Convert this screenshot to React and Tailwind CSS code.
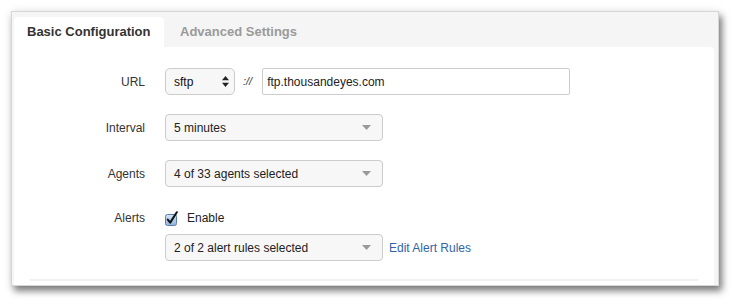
import React from 'react';

const Caret = () => (
  <svg width="9" height="5" viewBox="0 0 9 5" className="shrink-0">
    <path d="M0 0h9L4.5 5z" fill="#9a9a9a" />
  </svg>
);

const UpDown = () => (
  <svg width="7" height="11" viewBox="0 0 7 11" className="shrink-0">
    <path d="M3.5 0L7 4.3H0z" fill="#222" />
    <path d="M3.5 11L0 6.7h7z" fill="#222" />
  </svg>
);

const Dropdown = ({ value }) => (
  <div className="flex h-[27px] w-[218px] items-center justify-between rounded-[4px] border border-[#cccccc] bg-[#f7f7f7] pl-[8px] pr-[11px] text-[12px] text-[#222]">
    <span>{value}</span>
    <Caret />
  </div>
);

const Label = ({ children }) => (
  <div className="w-[116px] text-right text-[12px] text-[#333]">{children}</div>
);

const Checkbox = () => (
  <svg width="14" height="15" viewBox="0 0 14 15" className="shrink-0">
    <defs>
      <linearGradient id="cb" x1="0" y1="0" x2="0" y2="1">
        <stop offset="0" stopColor="#d6e6f7" />
        <stop offset="1" stopColor="#8fb4dc" />
      </linearGradient>
    </defs>
    <rect x="0.5" y="3.5" width="11" height="11" rx="2" fill="url(#cb)" stroke="#5b7ea6" />
    <path d="M2.8 8.6l2.4 3L11.8 1.2" fill="none" stroke="#111" strokeWidth="2" strokeLinecap="round" strokeLinejoin="round" />
  </svg>
);

export default function App() {
  return (
    <div className="h-[305px] w-[737px] bg-white pl-[11px] pt-[11px]" style={{ fontFamily: '"Liberation Sans", Arial, sans-serif' }}>
      <div className="flex h-[275px] w-[708px] flex-col border border-[#d6d6d6] bg-[#f5f5f5] pl-[2px] pr-[4px] pt-[5px] shadow-[3px_5px_7px_rgba(0,0,0,0.5),0_0_10px_rgba(0,0,0,0.08)]">
        {/* tabs */}
        <div className="flex h-[30px] items-stretch">
          <div className="flex w-[150px] items-center rounded-t-[4px] bg-white pl-[13px] text-[13px] font-bold text-[#333]">
            Basic Configuration
          </div>
          <div className="flex items-center pl-[16px] text-[13px] font-bold text-[#9a9a9a]">
            Advanced Settings
          </div>
        </div>

        {/* panel */}
        <div className="flex flex-1 flex-col rounded-tr-[4px] bg-white pt-[21px]">
          <div className="flex flex-col gap-[19px] pl-[15px]">
            <div className="flex items-center gap-[20px]">
              <Label>URL</Label>
              <div className="flex items-center">
                <div className="flex h-[27px] w-[70px] items-center justify-between rounded-[5px] border border-[#cccccc] bg-[#f7f7f7] pl-[8px] pr-[5px] text-[12px] text-[#111]">
                  <span>sftp</span>
                  <UpDown />
                </div>
                <span className="ml-[8px] text-[11px] italic text-[#333]">://</span>
                <div className="ml-[10px] flex h-[27px] w-[308px] items-center rounded-[2px] border border-[#cccccc] bg-white pl-[4px] text-[12px] text-[#222]">
                  ftp.thousandeyes.com
                </div>
              </div>
            </div>

            <div className="flex items-center gap-[20px]">
              <Label>Interval</Label>
              <Dropdown value="5 minutes" />
            </div>

            <div className="flex items-center gap-[20px]">
              <Label>Agents</Label>
              <Dropdown value="4 of 33 agents selected" />
            </div>

            <div className="mt-[2px] flex items-start gap-[20px]">
              <div className="flex h-[20px] items-center">
                <Label>Alerts</Label>
              </div>
              <div className="flex flex-col gap-[6px]">
                <div className="flex h-[20px] items-center gap-[8px] text-[12px] text-[#222]">
                  <Checkbox />
                  <span>Enable</span>
                </div>
                <div className="flex items-center gap-[6px]">
                  <Dropdown value="2 of 2 alert rules selected" />
                  <a className="text-[12px] text-[#2f66a8]">Edit Alert Rules</a>
                </div>
              </div>
            </div>
          </div>

          <div className="mx-[16px] mt-[18px] h-[2px] bg-[#eef0f2]" />
        </div>
      </div>
    </div>
  );
}
